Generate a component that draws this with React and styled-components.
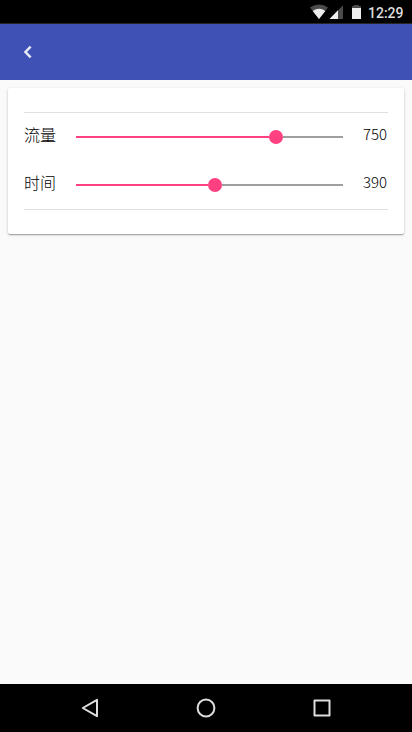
import React from "react";
import styled, { createGlobalStyle } from "styled-components";

const GlobalStyle = createGlobalStyle`
  * { box-sizing: border-box; }
  html, body { margin: 0; padding: 0; background: #fafafa; }
`;

const Screen = styled.div`
  width: 100%;
  height: 100vh;
  display: flex;
  flex-direction: column;
  background: #fafafa;
  color: #000;
  font-family: Roboto, "Noto Sans CJK SC", sans-serif;
`;

const StatusBar = styled.div`
  height: 24px;
  flex: none;
  display: flex;
  align-items: center;
  justify-content: flex-end;
  padding-right: 8px;
  background: #000;
  border-bottom: 1px solid #262626;
`;

const StatusIcons = styled.svg`
  display: block;
  width: 58px;
  height: 23px;
`;

const Clock = styled.span`
  width: 36px;
  font-size: 14px;
  line-height: 20px;
  font-weight: 500;
  color: #dedede;
  padding-top: 3px;
`;

const Toolbar = styled.header`
  height: 56px;
  flex: none;
  display: flex;
  align-items: center;
  padding-left: 16px;
  background: #3f51b5;
`;

const BackButton = styled.button`
  width: 24px;
  height: 24px;
  padding: 0;
  border: 0;
  background: none;
  color: #e8eaf6;
  svg { display: block; }
`;

const Content = styled.main`
  flex: 1;
  padding: 8px;
`;

const Card = styled.section`
  height: 146px;
  padding: 24px 16px;
  background: #fff;
  border-radius: 2px;
  box-shadow: 0 1px 3px rgba(0, 0, 0, 0.2), 0 1px 1px rgba(0, 0, 0, 0.14),
    0 2px 1px -1px rgba(0, 0, 0, 0.12);
`;

const SliderList = styled.div`
  border-top: 1px solid #e0e0e0;
  border-bottom: 1px solid #e0e0e0;
`;

const Row = styled.div`
  height: 48px;
  display: flex;
  align-items: center;
`;

const Label = styled.span`
  width: 52px;
  padding-bottom: 6px;
  font: 300 16px/24px "Noto Sans CJK SC", sans-serif;
`;

const Track = styled.div`
  width: 267px;
  height: 14px;
  display: flex;
  align-items: center;
`;

const Fill = styled.div`
  height: 2px;
  background: #ff4081;
`;

const Thumb = styled.div`
  width: 14px;
  height: 14px;
  flex: none;
  border-radius: 50%;
  background: #ff4081;
`;

const Rest = styled.div`
  flex: 1;
  height: 2px;
  background: #9e9e9e;
`;

const Value = styled.span`
  flex: 1;
  padding: 0 1px 6px 0;
  text-align: right;
  font: 300 15px/24px "Noto Sans CJK SC", sans-serif;
`;

const NavBar = styled.nav`
  height: 48px;
  flex: none;
  display: flex;
  align-items: center;
  justify-content: center;
  gap: 92px;
  background: #000;
`;

const NavIcon = styled.svg`
  display: block;
  width: 24px;
  height: 24px;
  fill: none;
  stroke: #dedede;
  stroke-width: 2;
  stroke-linejoin: round;
`;

const sliders = [
  { label: "流量", value: 750, offset: 193 },
  { label: "时间", value: 390, offset: 132 },
];

function SliderRow({ label, value, offset }) {
  return (
    <Row>
      <Label>{label}</Label>
      <Track>
        <Fill style={{ width: offset }} />
        <Thumb />
        <Rest />
      </Track>
      <Value>{value}</Value>
    </Row>
  );
}

export default function App() {
  return (
    <Screen>
      <GlobalStyle />
      <StatusBar>
        <StatusIcons viewBox="0 0 58 23">
          <path d="M0 7.6Q9 1.6 18 7.6L9 19Z" fill="#4a4a4a" />
          <path d="M2.7 11Q9 6.3 15.3 11L9 19Z" fill="#eee" />
          <path d="M19.5 19L33 5.2V19Z" fill="#4a4a4a" />
          <path d="M19.5 19L28 10.3V19Z" fill="#eee" />
          <path d="M44 5h5v1h2v2h-9V6h2z" fill="#4a4a4a" />
          <path d="M42 8h9V19h-9z" fill="#eee" />
        </StatusIcons>
        <Clock>12:29</Clock>
      </StatusBar>
      <Toolbar>
        <BackButton aria-label="返回">
          <svg width="24" height="24" viewBox="0 0 24 24" fill="none">
            <path d="M14.7 6.7L9.4 12l5.3 5.3" stroke="currentColor" strokeWidth="2.4" />
          </svg>
        </BackButton>
      </Toolbar>
      <Content>
        <Card>
          <SliderList>
            {sliders.map((s) => (
              <SliderRow key={s.label} {...s} />
            ))}
          </SliderList>
        </Card>
      </Content>
      <NavBar>
        <NavIcon viewBox="0 0 24 24">
          <path d="M4.8 12L19 3.8V20.2Z" />
        </NavIcon>
        <NavIcon viewBox="0 0 24 24">
          <circle cx="12" cy="12" r="8.4" />
        </NavIcon>
        <NavIcon viewBox="0 0 24 24">
          <rect x="4.5" y="4.5" width="15" height="15" />
        </NavIcon>
      </NavBar>
    </Screen>
  );
}
